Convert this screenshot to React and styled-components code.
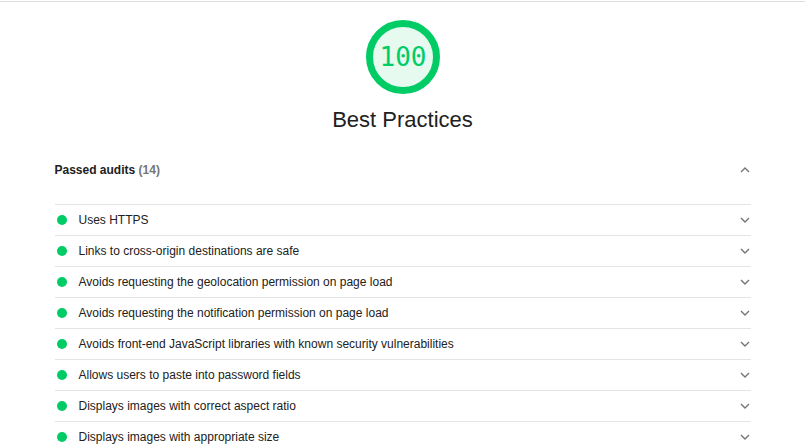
import React from "react";
import styled, { createGlobalStyle } from "styled-components";

const Global = createGlobalStyle`
  html, body { margin: 0; padding: 0; background: #fff; }
  body { overflow: hidden; font-family: "Liberation Sans", Arial, sans-serif; color: #212121; }
`;

const Page = styled.div`
  height: 444px;
  overflow: hidden;
`;

const TopRule = styled.div`
  margin-top: 1px;
  height: 1px;
  background: #dcdcdc;
`;

const GaugeArea = styled.div`
  display: flex;
  flex-direction: column;
  align-items: center;
  padding-top: 18px;
`;

const Gauge = styled.div`
  position: relative;
  width: 74px;
  height: 74px;
`;

const GaugeValue = styled.div`
  position: absolute;
  inset: 0;
  display: flex;
  align-items: center;
  justify-content: center;
  font-family: "DejaVu Sans Mono", monospace;
  font-size: 26px;
  color: #00cc66;
  padding-left: 1px;
`;

const Title = styled.div`
  margin-top: 13px;
  font-size: 22px;
  line-height: 26px;
  color: #212121;
`;

const Section = styled.div`
  width: 696px;
  margin: 22px auto 0;
`;

const GroupHeader = styled.div`
  display: flex;
  align-items: center;
  justify-content: space-between;
  height: 30px;
  font-size: 12px;
  font-weight: bold;
  color: #212121;
  margin-bottom: 19px;
`;

const Count = styled.span`
  color: #757575;
`;

const Row = styled.div`
  display: flex;
  align-items: center;
  height: 30px;
  border-top: 1px solid #e4e4e4;
  font-size: 12px;
  color: #212121;
`;

const Dot = styled.span`
  width: 10px;
  height: 10px;
  border-radius: 50%;
  background: #00cc66;
  margin-left: 2px;
  margin-right: 12px;
  flex: none;
`;

const RowText = styled.span`
  flex: 1;
`;

const ChevronBox = styled.span`
  display: flex;
  width: 12px;
  margin-right: 0;
  justify-content: center;
`;

const Chevron = ({ up }) => (
  <ChevronBox>
    <svg width="10" height="6" viewBox="0 0 10 6">
      <path
        d={up ? "M1 5 L5 1 L9 5" : "M1 1 L5 5 L9 1"}
        fill="none"
        stroke="#757575"
        strokeWidth="1.4"
      />
    </svg>
  </ChevronBox>
);

const audits = [
  "Uses HTTPS",
  "Links to cross-origin destinations are safe",
  "Avoids requesting the geolocation permission on page load",
  "Avoids requesting the notification permission on page load",
  "Avoids front-end JavaScript libraries with known security vulnerabilities",
  "Allows users to paste into password fields",
  "Displays images with correct aspect ratio",
  "Displays images with appropriate size",
];

export default function App() {
  return (
    <Page>
      <Global />
      <TopRule />
      <GaugeArea>
        <Gauge>
          <svg width="74" height="74" viewBox="0 0 74 74">
            <circle cx="37" cy="37" r="33.5" fill="#e6faf0" stroke="#00cc66" strokeWidth="7" />
          </svg>
          <GaugeValue>100</GaugeValue>
        </Gauge>
        <Title>Best Practices</Title>
      </GaugeArea>
      <Section>
        <GroupHeader>
          <span>
            Passed audits <Count>(14)</Count>
          </span>
          <Chevron up />
        </GroupHeader>
        {audits.map((a) => (
          <Row key={a}>
            <Dot />
            <RowText>{a}</RowText>
            <Chevron />
          </Row>
        ))}
      </Section>
    </Page>
  );
}
